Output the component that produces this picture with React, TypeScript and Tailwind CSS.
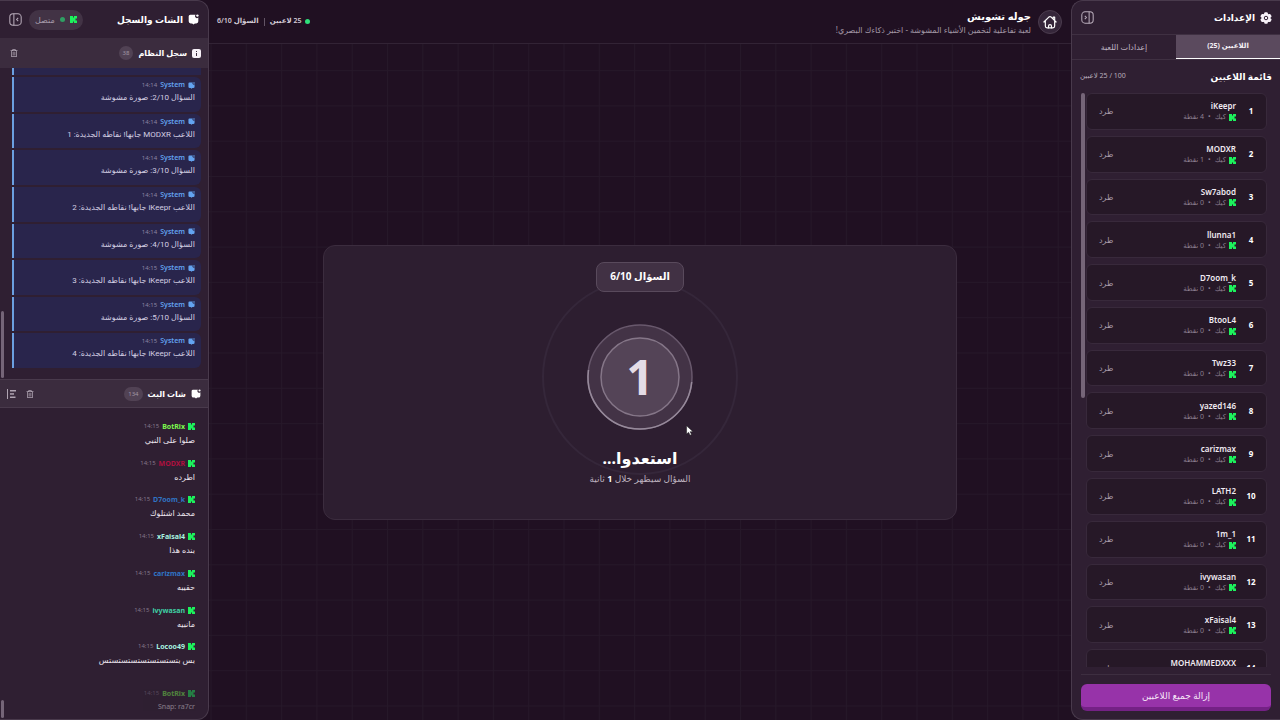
import { FaRegTrashAlt } from "react-icons/fa";
import clsx from "clsx";

const players = [
  { name: "iKeepr", points: 4 },
  { name: "MODXR", points: 1 },
  { name: "Sw7abod", points: 0 },
  { name: "llunna1", points: 0 },
  { name: "D7oom_k", points: 0 },
  { name: "BtooL4", points: 0 },
  { name: "Twz33", points: 0 },
  { name: "yazed146", points: 0 },
  { name: "carizmax", points: 0 },
  { name: "LATH2", points: 0 },
  { name: "1m_1", points: 0 },
  { name: "ivywasan", points: 0 },
  { name: "xFaisal4", points: 0 },
  { name: "MOHAMMEDXXX", points: 0 },
];

const logs = [
  { time: "14:14", text: "السؤال 2/10: صورة مشوشة" },
  { time: "14:14", text: "اللاعب MODXR جابها! نقاطه الجديدة: 1" },
  { time: "14:14", text: "السؤال 3/10: صورة مشوشة" },
  { time: "14:14", text: "اللاعب iKeepr جابها! نقاطه الجديدة: 2" },
  { time: "14:14", text: "السؤال 4/10: صورة مشوشة" },
  { time: "14:15", text: "اللاعب iKeepr جابها! نقاطه الجديدة: 3" },
  { time: "14:15", text: "السؤال 5/10: صورة مشوشة" },
  { time: "14:15", text: "اللاعب iKeepr جابها! نقاطه الجديدة: 4" },
];

const messages = [
  { name: "BotRix", color: "text-[#7dfb4e]", text: "صلوا على النبي" },
  { name: "MODXR", color: "text-[#b0103f]", text: "اطرده" },
  { name: "D7oom_k", color: "text-[#2f74c4]", text: "محمد اشتلوك" },
  { name: "xFaisal4", color: "text-[#a8f3e0]", text: "بنده هذا" },
  { name: "carizmax", color: "text-[#2f74c4]", text: "حقيبه" },
  { name: "ivywasan", color: "text-[#3fd0a4]", text: "مانبيه" },
  { name: "Locoo49", color: "text-[#a8f3e0]", text: "بس بتستستستستستستستس" },
];

function KickIcon() {
  return (
    <svg viewBox="0 0 7 7" className="size-[7px] shrink-0" fill="#1cf25c" aria-hidden="true">
      <path d="M0 0h3v1.5h1V0h3v2.5H5.500v2H7V7H4V5.500H3V7H0z" />
    </svg>
  );
}

function ChatIcon({ className }: { className: string }) {
  return (
    <svg viewBox="0 0 24 24" className={clsx("shrink-0", className)} fill="currentColor" aria-hidden="true">
      <path d="M5 1.5h11.5a4 4 0 0 0 6 6V16a4.5 4.5 0 0 1-4.5 4.5h-3L12 23l-3-2.5H6A4.5 4.5 0 0 1 1.5 16V5A3.5 3.5 0 0 1 5 1.5z" />
      <circle cx="20.5" cy="3.5" r="2.6" />
    </svg>
  );
}

function InfoIcon() {
  return (
    <svg viewBox="0 0 9 9" className="size-[9px] shrink-0" aria-hidden="true">
      <rect width="9" height="9" rx="2" fill="#f7f1f8" />
      <path d="M4 2h1v1H4zM4 4h1v3H4z" fill="#3b2c3e" />
    </svg>
  );
}

function GearIcon() {
  return (
    <svg viewBox="0 0 24 24" className="size-3 shrink-0" aria-hidden="true">
      <g fill="#f7f1f8">
        <circle cx="12" cy="12" r="9" />
        <rect x="8.5" y="0.5" width="7" height="23" rx="2" />
        <rect x="8.5" y="0.5" width="7" height="23" rx="2" transform="rotate(60 12 12)" />
        <rect x="8.5" y="0.5" width="7" height="23" rx="2" transform="rotate(120 12 12)" />
      </g>
      <circle cx="12" cy="12" r="3.5" fill="none" stroke="#2f1f32" strokeWidth="2" />
    </svg>
  );
}

function PanelIcon({ flip = false }: { flip?: boolean }) {
  return (
    <svg viewBox="0 0 24 24" className={clsx("size-[13px]", flip && "-scale-x-100")} fill="none" stroke="currentColor" strokeWidth="1.9" aria-hidden="true">
      <rect x="1.5" y="1.5" width="21" height="21" rx="6" />
      <path d="M15 1.5v21M7 9l3 3-3 3" />
    </svg>
  );
}

function HomeIcon() {
  return (
    <svg viewBox="0 0 24 24" className="size-[14px]" fill="none" stroke="currentColor" strokeWidth="2" strokeLinejoin="round" strokeLinecap="round" aria-hidden="true">
      <path d="M1.5 12 10 3.5a3 3 0 0 1 4 0L22.5 12M17.5 6.5V3.5h2.5v5.5M4 10v9a3 3 0 0 0 3 3h10a3 3 0 0 0 3-3v-9" />
      <path d="M9.5 22v-3a2.5 2.5 0 0 1 5 0v3" />
    </svg>
  );
}

function SettingsPanel() {
  return (
    <aside className="flex w-[209px] shrink-0 flex-col rounded-l-xl border border-r-0 border-[#493a4c] bg-[#2f1f32]">
      <header className="flex h-[33px] shrink-0 items-center justify-between pr-2 pl-[9px]">
        <h2 className="flex items-center gap-[5px] text-[9px] font-bold text-white">
          <GearIcon />
          الإعدادات
        </h2>
        <button type="button" aria-label="إخفاء الإعدادات" className="text-[#b9adbb]">
          <PanelIcon />
        </button>
      </header>
      <div role="tablist" className="flex h-[26px] shrink-0 border-y border-[#3f3042]">
        <button type="button" role="tab" aria-selected="true" className="flex-1 border-b border-white bg-[#5b4a5e] text-[7px] font-bold text-[#f4eff5]">
          اللاعبين (25)
        </button>
        <button type="button" role="tab" aria-selected="false" className="flex-1 text-[8px] text-[#bfb4c1]">
          إعدادات اللعبة
        </button>
      </div>
      <div className="flex h-[33px] shrink-0 items-center justify-between px-2">
        <h3 className="text-[9px] font-bold text-white">قائمة اللاعبين</h3>
        <span className="text-[7px] text-[#b9adbb]">100 / 25 لاعبين</span>
      </div>
      <div className="mr-[13px] ml-[9px] flex min-h-0 flex-1 gap-px overflow-hidden">
        <ul className="flex h-[593px] flex-1 flex-col gap-[6px]">
          {players.map((player, i) => (
            <li key={player.name} className="flex flex-1 items-center rounded-md border border-[#38293b] bg-[#261827] pl-3">
              <span className="w-[30px] shrink-0 text-center text-[8px] font-bold text-white">{i + 1}</span>
              <div className="flex min-w-0 flex-1 flex-col">
                <span className="text-[8px] leading-3 font-semibold text-[#f1ebf2]">{player.name}</span>
                <span className="flex items-center gap-[3px] text-[7px] leading-[10px] text-[#8d7f90]">
                  <KickIcon />
                  <span>كيك</span>
                  <span className="px-px">•</span>
                  <span>{player.points} نقطة</span>
                </span>
              </div>
              <button type="button" className="text-[8px] text-[#a99dac]">
                طرد
              </button>
            </li>
          ))}
        </ul>
        <div className="h-[305px] w-1 rounded-full bg-[#756578]" />
      </div>
      <footer className="mx-[9px] mt-[7px] border-t border-[#3d2e40] pt-[9px] pb-2">
        <button type="button" className="block h-[27px] w-full rounded-md border-b-4 border-[#742185] bg-[#9733a9] text-[9px] text-[#f6e6f8]">
          إزالة جميع اللاعبين
        </button>
      </footer>
    </aside>
  );
}

function Countdown() {
  return (
    <section className="flex w-full max-w-[634px] flex-col items-center rounded-xl border border-[#3b2c3e] bg-[#2d1e30] pt-4 pb-8">
      <div className="relative z-10 flex h-[30px] items-center rounded-lg border border-[#594a5c] bg-[#413144] px-[13px] text-[10px] font-bold text-white">
        السؤال 6/10
      </div>
      <div className="mt-8 mb-px grid size-[106px] place-items-center">
        <svg viewBox="0 0 106 106" className="col-start-1 row-start-1 size-[106px] overflow-visible" fill="none" aria-hidden="true">
          <circle cx="53" cy="53" r="97" stroke="#35273a" strokeWidth="2" />
          <circle cx="53" cy="53" r="52" fill="#433346" stroke="#68586c" strokeWidth="1.5" />
          <path d="M1.5 46A52 52 0 0 0 53 105A52 52 0 0 0 104.7 58" stroke="#978a9b" strokeWidth="1.5" />
          <circle cx="53" cy="53" r="39" fill="#544457" stroke="#857688" strokeWidth="1.5" />
        </svg>
        <span className="col-start-1 row-start-1 text-[48px] leading-none font-bold text-[#e4dce6]">1</span>
      </div>
      <h2 className="mt-4 text-[16px] leading-[22px] font-bold text-white">استعدوا...</h2>
      <p className="mt-[2px] text-[9px] leading-4 text-[#bdb2bf]">
        السؤال سيظهر خلال <b className="text-white">1</b> ثانية
      </p>
    </section>
  );
}

function Game() {
  return (
    <main className="relative flex min-w-0 flex-1 flex-col">
      <svg className="absolute inset-0 size-full" aria-hidden="true">
        <defs>
          <pattern id="grid" x="1.5" y="-0.5" width="35.3" height="35.3" patternUnits="userSpaceOnUse">
            <path d="M0 0.5h35.3M0.5 0v35.3" stroke="#261829" strokeWidth="1" />
          </pattern>
        </defs>
        <rect width="100%" height="100%" fill="url(#grid)" />
      </svg>
      <header className="relative flex h-11 shrink-0 items-center justify-between border-b border-[#322335] bg-[#201022] pr-[9px] pl-2">
        <div className="flex items-center gap-[7px]">
          <a href="#" aria-label="الرئيسية" className="flex size-6 items-center justify-center rounded-full border border-[#4b3c4e] bg-[#35263a] text-white">
            <HomeIcon />
          </a>
          <div>
            <h1 className="text-[10px] leading-4 font-bold text-white">جوله تشويش</h1>
            <p className="text-[8px] leading-[11px] text-[#a297a5]">لعبة تفاعلية لتخمين الأشياء المشوشة - اختبر ذكاءك البصري!</p>
          </div>
        </div>
        <div className="flex items-center gap-[5px] text-[7px] font-semibold text-[#d3cad5]">
          <span className="flex items-center gap-[3px]">
            <span className="size-[5px] rounded-full bg-[#2fe07a]" />
            25 لاعبين
          </span>
          <span className="h-2 w-px bg-[#625465]" />
          <span>السؤال 6/10</span>
        </div>
      </header>
      <div className="relative flex flex-1 items-center justify-center">
        <Countdown />
      </div>
    </main>
  );
}

function LogItem({ time, text }: { time: string; text: string }) {
  return (
    <li className="flex flex-1 flex-col rounded-r-md border-l-2 border-[#6b9fe0] bg-[#29254c] pt-[2px] pr-[6px]">
      <div className="flex items-center gap-[3px] text-[7px] leading-[12px]">
        <ChatIcon className="size-[7px] text-[#63a3f0]" />
        <span className="font-semibold text-[#63a3f0]">System</span>
        <span className="text-[6px] text-[#8c85a3]">{time}</span>
      </div>
      <p className="font-['Roboto','DejaVu_Sans',sans-serif] text-[8px] leading-[14px] whitespace-nowrap text-[#d3cee2]">{text}</p>
    </li>
  );
}

function ChatMessage({ name, color, text }: { name: string; color: string; text: string }) {
  return (
    <li className="flex flex-1 flex-col pr-[13px]">
      <div className="flex items-center gap-[3px] text-[7px] leading-[13px]">
        <KickIcon />
        <span className={clsx("font-bold", color)}>{name}</span>
        <span className="text-[6px] text-[#85778a]">14:15</span>
      </div>
      <p className="text-[8px] leading-[14px] whitespace-nowrap text-[#ece5ee]">{text}</p>
    </li>
  );
}

function ChatPanel() {
  return (
    <aside className="flex w-[209px] shrink-0 flex-col overflow-hidden rounded-r-xl border border-l-0 border-[#493a4c] bg-[#2f1f32]">
      <header className="flex h-[37px] shrink-0 items-center justify-between px-[9px]">
        <h2 className="flex items-center gap-[5px] text-[9px] font-bold text-white">
          <ChatIcon className="size-[11px]" />
          الشات والسجل
        </h2>
        <div className="flex items-center gap-[7px]">
          <span className="flex h-5 items-center gap-[5px] rounded-full bg-[#423345] px-[6px] text-[8px] text-[#a89cab]">
            <KickIcon />
            <span className="size-[5px] rounded-full bg-[#2f9f63]" />
            <span>متصل</span>
          </span>
          <button type="button" aria-label="إخفاء الشات" className="text-[#b9adbb]">
            <PanelIcon flip />
          </button>
        </div>
      </header>

      <div className="flex h-[30px] shrink-0 items-center justify-between bg-[#3b2c3e] pr-[7px] pl-[10px]">
        <h3 className="flex items-center gap-[5px] text-[8px] font-bold text-white">
          <InfoIcon />
          سجل النظام
          <span className="rounded-full bg-[#514254] px-1 text-[6px] leading-[14px] font-normal text-[#a196a4]">38</span>
        </h3>
        <button type="button" aria-label="مسح السجل" className="text-[#b0a4b2]">
          <FaRegTrashAlt size={8} />
        </button>
      </div>
      <div className="flex h-[311px] shrink-0 overflow-hidden">
        <ul className="flex h-full min-w-0 flex-1 flex-col gap-[2px] pr-[7px] pb-[11px] pl-3">
          <li className="h-[7px] shrink-0 border-l-2 border-[#6b9fe0] bg-[#29254c]" />
          {logs.map((log, i) => (
            <LogItem key={i} {...log} />
          ))}
        </ul>
        <div className="mb-px -mr-1 flex w-1 flex-col justify-end">
          <div className="h-[67px] w-[3px] rounded-full bg-[#756578]" />
        </div>
      </div>

      <div className="flex h-[29px] shrink-0 items-center justify-between border-y border-[#493a4c] bg-[#3b2c3e] px-[7px]">
        <h3 className="flex items-center gap-[5px] text-[8px] font-bold text-white">
          <ChatIcon className="size-[10px]" />
          شات البث
          <span className="rounded-full bg-[#514254] px-1 text-[6px] leading-[14px] font-normal text-[#a196a4]">134</span>
        </h3>
        <div className="flex items-center gap-[9px] text-[#b0a4b2]">
          <button type="button" aria-label="مسح الشات">
            <FaRegTrashAlt size={8} />
          </button>
          <button type="button" aria-label="محاذاة">
            <svg viewBox="0 0 10 10" className="size-[10px]" fill="currentColor" aria-hidden="true">
              <rect x="0" y="0" width="1" height="10" />
              <rect x="3" y="1" width="6" height="1.5" />
              <rect x="3" y="4.2" width="4" height="1.5" />
              <rect x="3" y="7.5" width="5.5" height="1.5" />
            </svg>
          </button>
        </div>
      </div>
      <div className="flex min-h-0 flex-1 overflow-hidden">
        <div className="min-w-0 flex-1 pt-3">
          <ul className="flex h-[257px] flex-col">
            {messages.map((message) => (
              <ChatMessage key={message.name} {...message} />
            ))}
          </ul>
          <div className="mt-[10px] flex flex-col pr-[13px] opacity-45">
            <div className="flex items-center gap-[3px] text-[7px] leading-[13px]">
              <KickIcon />
              <span className="font-bold text-[#7dfb4e]">BotRix</span>
              <span className="text-[6px] text-[#85778a]">14:15</span>
            </div>
            <p className="text-[7px] leading-[14px] text-[#ece5ee]">Snap: ra7cr</p>
          </div>
        </div>
        <div className="mb-px flex w-1 flex-col justify-end">
          <div className="h-[18px] w-[3px] rounded-full bg-[#756578]" />
        </div>
      </div>
    </aside>
  );
}

export default function App() {
  return (
    <div dir="rtl" className="relative flex h-screen overflow-hidden bg-[#201022] font-['Noto_Sans','DejaVu_Sans',sans-serif]">
      <SettingsPanel />
      <Game />
      <ChatPanel />
      <svg viewBox="0 0 12 18" className="absolute top-[425px] left-[686px] h-[11px] w-[7px]" aria-hidden="true">
        <path d="M1 1v14l3.5-3 2.5 5 2.5-1-2.5-5H12z" fill="#fff" stroke="#111" strokeWidth="0.8" />
      </svg>
    </div>
  );
}
